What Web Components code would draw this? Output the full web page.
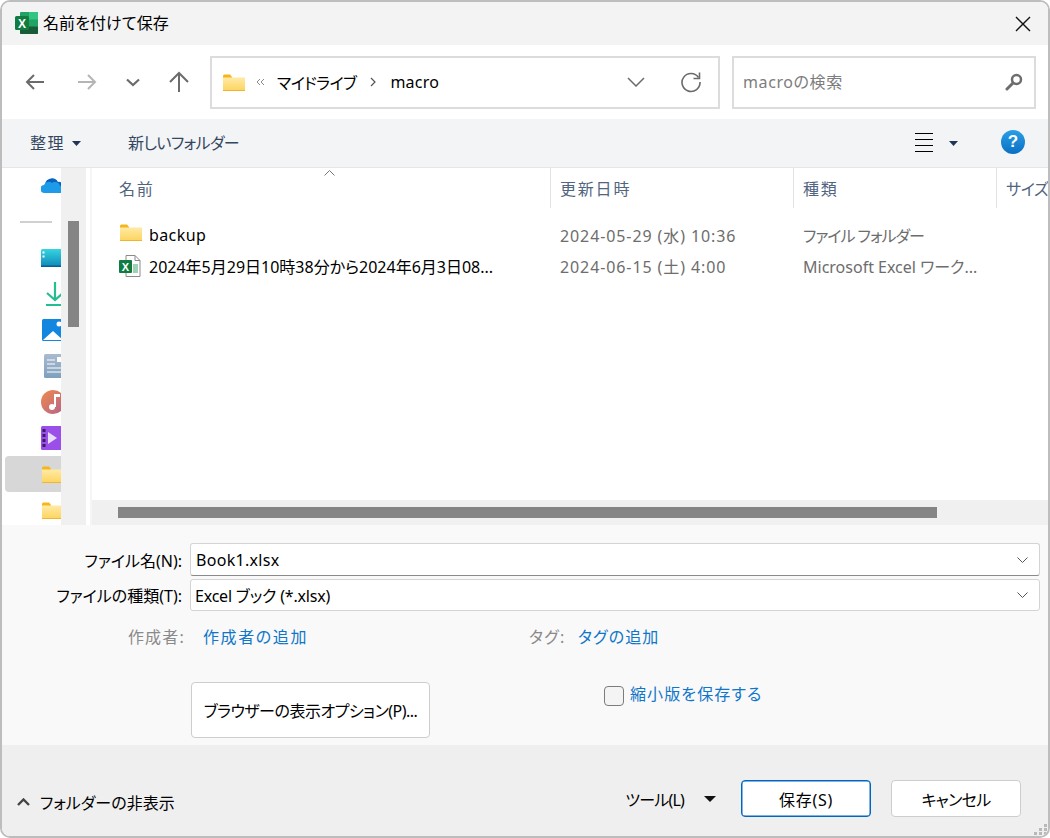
<!DOCTYPE html>
<html lang="ja">
<head>
<meta charset="utf-8">
<title>名前を付けて保存</title>
<style>
  html, body { margin: 0; padding: 0; background: #fff; }
  body { font-family: "Noto Sans", "Noto Sans CJK JP", sans-serif; font-size: 16px; color: #000; font-feature-settings: "palt"; }
</style>
</head>
<body>
<save-dialog></save-dialog>

<script>
// shared icons
const ICONS = {
    folder: `<svg width="24" height="19" viewBox="0 0 24 19"><path d="M1 3a1.500 1.500 0 0 1 1.500-1.500H8l2 2.500v2H1z" fill="#f6b61a"/><path d="M1 4.500h22V17a1 1 0 0 1-1 1H2a1 1 0 0 1-1-1z" fill="url(#fg)"/><path d="M1 17.300h22V18H1z" fill="#e9a825"/><defs><linearGradient id="fg" x1="0" y1="0" x2="0" y2="1"><stop offset="0" stop-color="#ffeaa6"/><stop offset="1" stop-color="#fdd45c"/></linearGradient></defs></svg>`,
    excel: `<svg width="24" height="24" viewBox="0 0 24 24"><rect x="6" y="1" width="18" height="22" rx="1" fill="#21a366"/><rect x="15" y="1" width="9" height="7.500" fill="#33c481"/><rect x="6" y="8" width="9" height="7.500" fill="#107c41"/><rect x="6" y="15.500" width="18" height="7.500" rx="1" fill="#185c37"/><rect x="1" y="5" width="14" height="14" rx="1.500" fill="#107c41"/><text x="8" y="16.500" font-family="Liberation Sans" font-size="12" font-weight="700" fill="#fff" text-anchor="middle">X</text></svg>`,
    caret: `<svg width="9" height="5" viewBox="0 0 9 5"><path d="M0 0h9L4.500 5z" fill="#1f3556"/></svg>`
};

function define(name, css, html) {
    customElements.define(name, class extends HTMLElement {
        constructor() {
            super();
            this.attachShadow({ mode: 'open' }).innerHTML = `<style>${css}</style>${html}`;
        }
    });
}

define('title-bar', `
    :host { display: flex; align-items: center; height: 43px; background: #f3f3f3; padding: 0 12px; }
    svg.app { margin-right: 5px; position: relative; top: -1px; }
    span { flex: 1; position: relative; top: -2px; letter-spacing: .1px; }
    svg.close { margin-right: 5px; }
`, `
    ${ICONS.excel.replace('<svg', '<svg class="app"')}
    <span>名前を付けて保存</span>
    <svg class="close" width="16" height="16" viewBox="0 0 16 16"><path d="M1 1l14 14M15 1L1 15" stroke="#111" stroke-width="1.400" fill="none"/></svg>
`);

define('nav-bar', `
    :host { display: flex; align-items: center; height: 74px; background: #fff; padding: 0 12px 0 21px; box-sizing: border-box; }
    .b { display: flex; width: 24px; justify-content: center; }
    .path, .search { display: flex; align-items: center; height: 53px; box-sizing: border-box; border: 2px solid #dcdcdc; }
    .path { width: 510px; margin-left: 19px; padding-left: 10px; }
    .search { width: 304px; margin-left: 12px; padding: 0 11px 0 9px; color: #7d7d7d; justify-content: space-between; }
    .grow { flex: 1; }
`, `
    <span class="b"><svg width="20" height="18" viewBox="0 0 20 18"><path d="M19 9H2M9 2L2 9l7 7" stroke="#6b6b6b" stroke-width="2" fill="none"/></svg></span>
    <span class="b" style="margin-left:28px"><svg width="20" height="18" viewBox="0 0 20 18"><path d="M1 9h17M11 2l7 7-7 7" stroke="#b5b5b5" stroke-width="2" fill="none"/></svg></span>
    <span class="b" style="margin-left:22px"><svg width="14" height="9" viewBox="0 0 14 9"><path d="M1 1.500l6 5.500 6-5.500" stroke="#6b6b6b" stroke-width="2.200" fill="none"/></svg></span>
    <span class="b" style="margin-left:22px"><svg width="20" height="22" viewBox="0 0 20 22"><path d="M10 21V2M1 11l9-9 9 9" stroke="#6b6b6b" stroke-width="2" fill="none"/></svg></span>
    <div class="path">
        ${ICONS.folder}
        <svg style="margin-left:10px" width="9" height="8" viewBox="0 0 9 8"><path d="M4 1L1 4l3 3M8 1L5 4l3 3" stroke="#8a8a8a" fill="none"/></svg>
        <span style="margin-left:12px;letter-spacing:-.6px">マイドライブ</span>
        <svg style="margin-left:14px" width="6" height="10" viewBox="0 0 6 10"><path d="M1 1l4 4-4 4" stroke="#555" stroke-width="1.200" fill="none"/></svg>
        <span style="margin-left:14px;letter-spacing:.2px">macro</span>
        <span class="grow"></span>
        <svg width="18" height="10" viewBox="0 0 18 10"><path d="M1 1l8 8 8-8" stroke="#6b6b6b" stroke-width="1.500" fill="none"/></svg>
        <svg style="margin:0 16px 0 35px" width="22" height="22" viewBox="0 0 22 22"><path d="M18.500 6.500A9 9 0 1 0 20 11" stroke="#6b6b6b" stroke-width="1.600" fill="none"/><path d="M19.500 1.500v6h-6" stroke="#6b6b6b" stroke-width="1.600" fill="none"/></svg>
    </div>
    <div class="search">
        <span style="letter-spacing:.6px;position:relative;top:-1px">macroの検索</span>
        <svg width="18" height="18" viewBox="0 0 18 18"><circle cx="11.500" cy="6.500" r="4.500" stroke="#6d6d6d" stroke-width="2.500" fill="none"/><path d="M8 10l-6 6" stroke="#6d6d6d" stroke-width="3" stroke-linecap="round"/></svg>
    </div>
`);

define('tool-bar', `
    :host { display: flex; align-items: center; height: 49px; box-sizing: border-box; background: #f3f4f6; border-bottom: 1px solid #e6e6e6; padding: 0 23px 0 28px; color: #33475f; }
    .t { position: relative; top: -1px; }
    .grow { flex: 1; }
    .help { width: 24px; height: 24px; border-radius: 50%; background: linear-gradient(#2a9fe6, #0a6fc4); color: #fff; text-align: center; font: 700 17px/24px "Liberation Sans", sans-serif; position: relative; top: -1px; }
    .lines { display: flex; flex-direction: column; gap: 5px; width: 18px; margin-left: 1px; position: relative; top: -1px; }
    .lines i { display: block; height: 1px; background: #000; }
`, `
    <span class="t" style="letter-spacing:1.500px">整理</span>
    <span style="display:flex;margin-left:7px">${ICONS.caret}</span>
    <span class="t" style="margin-left:47px;letter-spacing:-.6px">新しいフォルダー</span>
    <span class="grow"></span>
    <span class="lines"><i></i><i></i><i></i><i></i></span>
    <span style="display:flex;margin:0 43px 0 16px">${ICONS.caret}</span>
    <span class="help">?</span>
`);

define('nav-pane', `
    :host { display: flex; flex-direction: column; width: 59px; height: 357px; overflow: hidden; background: #fff; flex: none; }
    .row { display: flex; align-items: center; flex: none; height: 36px; margin-left: 3px; padding-left: 36px; border-radius: 4px; width: 120px; }
    .row svg { flex: none; }
    .sel { background: #d7d7d7; }
    .line { height: 2px; width: 32px; margin-left: -21px; background: #d0d0d0; }
`, `
    <div class="row"><svg width="24" height="16" viewBox="0 0 24 16"><path d="M4 6a7 7 0 0 1 13-2 5 5 0 0 1 6 4H9z" fill="#0a62c0"/><path d="M4 15a4 4 0 0 1-1-8 5 5 0 0 1 8-2 5 5 0 0 1 8 3h1a3.500 3.500 0 0 1 0 7z" fill="#1d9be8"/></svg></div>
    <div class="row"><div class="line"></div></div>
    <div class="row"><svg width="24" height="18" viewBox="0 0 24 18"><defs><linearGradient id="d" x1="0" y1="0" x2="0" y2="1"><stop offset="0" stop-color="#36d5e0"/><stop offset="1" stop-color="#0f86b8"/></linearGradient></defs><rect width="24" height="18" rx="1.500" fill="url(#d)"/><rect y="16.500" width="24" height="1.500" fill="#0a5c96"/><rect x="1.500" y="2.500" width="2" height="2" fill="#fff"/><rect x="1.500" y="6.500" width="2" height="2" fill="#fff"/></svg></div>
    <div class="row"><svg style="margin-left:4px" width="20" height="24" viewBox="0 0 20 24"><path d="M10 0v18M2 11l8 7 8-7" stroke="#26bd91" stroke-width="2.200" fill="none"/><path d="M1 23h18" stroke="#26bd91" stroke-width="2"/></svg></div>
    <div class="row"><svg style="margin-left:1px" width="24" height="22" viewBox="0 0 24 22"><rect width="24" height="22" rx="1.500" fill="#1386e0"/><path d="M1 21l10-9 10 9z" fill="#fff"/><circle cx="17" cy="5" r="2.500" fill="#fff"/></svg></div>
    <div class="row"><svg style="margin-left:3px" width="22" height="24" viewBox="0 0 22 24"><defs><linearGradient id="n" x1="0" y1="0" x2="0" y2="1"><stop offset="0" stop-color="#a9bbd0"/><stop offset="1" stop-color="#7f9fbd"/></linearGradient></defs><rect width="22" height="24" rx="1.500" fill="url(#n)"/><path d="M3 6h8M3 10h8M3 14h14M3 18h14" stroke="#fff" stroke-width="1.200"/><rect x="13" y="3" width="5" height="5" fill="#fff"/></svg></div>
    <div class="row"><svg width="24" height="24" viewBox="0 0 24 24"><defs><linearGradient id="m" x1="0" y1="0" x2="1" y2="1"><stop offset="0" stop-color="#f08a4c"/><stop offset="1" stop-color="#b4628c"/></linearGradient></defs><circle cx="12" cy="12" r="12" fill="url(#m)"/><path d="M14 4v13" stroke="#fff" stroke-width="2"/><circle cx="11" cy="17" r="3" fill="#fff"/><path d="M14 4h5v3h-5z" fill="#fff"/></svg></div>
    <div class="row"><svg width="24" height="24" viewBox="0 0 24 24"><rect width="24" height="24" rx="1.500" fill="#9a4fe8"/><path d="M7 6l9 6-9 6z" fill="#e8dcfb"/><path d="M1.500 3h3v3h-3zM1.500 8h3v3h-3zM1.500 13h3v3h-3zM1.500 18h3v3h-3z" fill="#3c1c6a"/></svg></div>
    <div class="row sel">${ICONS.folder}</div>
    <div class="row">${ICONS.folder}</div>
`);

define('v-scroll', `
    :host { display: block; width: 25px; height: 357px; background: #f0f0f0; padding: 53px 0 0 7px; box-sizing: border-box; flex: none; }
    div { width: 11px; height: 106px; background: #858585; }
`, `<div></div>`);

define('file-row', `
    :host { display: grid; grid-template-columns: 458px 243px 1fr; align-items: center; height: 31px; white-space: nowrap; }
    .name { display: flex; align-items: center; padding-left: 27px; }
    .ic { display: flex; width: 30px; flex: none; }
    .date { padding-left: 10px; color: #6d6d6d; letter-spacing: .9px; }
    .type { padding-left: 10px; color: #6d6d6d; }
`, `
    <div class="name"><span class="ic"><slot name="icon"></slot></span><slot name="name"></slot></div>
    <div class="date"><slot name="date"></slot></div>
    <div class="type"><slot name="type"></slot></div>
`);

define('file-list', `
    :host { display: flex; flex-direction: column; flex: 1; height: 357px; min-width: 0; background: #fff; }
    .head { display: grid; grid-template-columns: 459px 243px 203px 1fr; height: 40px; color: #51657f; position: relative; flex: none; letter-spacing: 1.800px; }
    .head div { padding-left: 9px; display: flex; align-items: center; border-right: 1px solid #e3e3e3; box-sizing: border-box; overflow: hidden; white-space: nowrap; }
    .head div:first-child { padding-left: 27px; }
    .head div:last-of-type { border: 0; letter-spacing: -.3px; }
    .sort { position: absolute; left: 232px; top: 2px; }
    .rows { flex: 1; padding-top: 11px; }
    .hs { height: 25px; background: #f0f0f0; padding: 7px 0 0 26px; box-sizing: border-box; flex: none; }
    .hs i { display: block; width: 819px; height: 11px; background: #858585; }
`, `
    <div class="head">
        <div>名前</div><div>更新日時</div><div>種類</div><div>サイズ</div>
        <svg class="sort" width="11" height="6" viewBox="0 0 11 6"><path d="M.5 5.500l5-5 5 5" stroke="#777" fill="none"/></svg>
    </div>
    <div class="rows"><slot></slot></div>
    <div class="hs"><i></i></div>
`);

define('field-row', `
    :host { display: grid; grid-template-columns: 180px 850px; column-gap: 8px; align-items: center; }
    label { text-align: right; white-space: nowrap; }
    .box { display: flex; align-items: center; justify-content: space-between; box-sizing: border-box; height: var(--h, 33px); background: #fff; border: 1px solid #d4d4d4; border-bottom-color: var(--under, #d4d4d4); border-radius: 3px; padding: 0 11px 0 var(--pad, 5px); letter-spacing: var(--ls, .3px); }
`, `
    <label style="letter-spacing:0"><slot name="label"></slot></label>
    <div class="box">
        <slot></slot>
        <svg width="11" height="6" viewBox="0 0 11 6"><path d="M.5.500l5 5 5-5" stroke="#555" fill="none"/></svg>
    </div>
`);

define('meta-row', `
    :host { display: flex; align-items: center; height: 24px; white-space: nowrap; }
    .k { color: #8a8a8a; letter-spacing: 1.200px; }
    .v { color: #0f76c9; letter-spacing: 1.600px; }
`, `
    <span class="k" style="width:183px;text-align:right">作成者:</span>
    <span class="v" style="width:326px;margin-left:18px">作成者の追加</span>
    <span class="k" style="width:49px">タグ:</span>
    <span class="v" style="letter-spacing:1.100px">タグの追加</span>
`);

define('dlg-button', `
    :host { display: flex; align-items: center; justify-content: center; box-sizing: border-box; width: var(--w, 130px); height: var(--bh, 37px); background: #fff; border: 1px solid #cdcdcd; border-radius: 4px; white-space: nowrap; flex: none; letter-spacing: var(--ls, 0); }
    :host([primary]) { border-color: #0067c0; box-shadow: inset 0 0 0 .5px #0067c0; }
`, `<slot></slot>`);

define('save-form', `
    :host { display: flex; flex-direction: column; height: 220px; background: #f9f9f9; padding-top: 18px; box-sizing: border-box; }
    .opts { display: flex; align-items: flex-start; margin: 34px 0 0 189px; }
    .check { display: flex; align-items: flex-start; margin: 4px 0 0 174px; color: #0f76c9; white-space: nowrap; letter-spacing: 1.100px; }
    .check i { display: block; width: 20px; height: 20px; box-sizing: border-box; background: #f4f4f4; border: 1px solid #7c7c7c; border-radius: 4px; margin: 0 6px 0 0; }
    .check span { line-height: 16px; }
`, `
    <field-row style="--under:#8a8a8a"><span slot="label">ファイル名(N):</span>Book1.xlsx</field-row>
    <field-row style="--h:32px;--pad:4px;--ls:-.2px;margin-top:3px"><span slot="label">ファイルの種類(T):</span>Excel ブック (*.xlsx)</field-row>
    <meta-row style="margin-top:13px"></meta-row>
    <div class="opts">
        <dlg-button style="--w:239px;--bh:56px;--ls:-.5px">ブラウザーの表示オプション(P)...</dlg-button>
        <div class="check"><i></i><span>縮小版を保存する</span></div>
    </div>
`);

define('dialog-footer', `
    :host { display: flex; align-items: flex-end; height: 91px; box-sizing: border-box; background: #efefef; padding: 0 27px 19px 15px; white-space: nowrap; position: relative; }
    .hide { display: flex; align-items: center; height: 37px; margin-bottom: -3px; }
    .hide svg { margin-right: 10px; }
    .grow { flex: 1; }
    .tools { display: flex; align-items: center; height: 37px; margin-right: 25px; letter-spacing: -.8px; }
    .grip { position: absolute; right: 0; bottom: 0; }
`, `
    <div class="hide"><svg width="13" height="8" viewBox="0 0 13 8"><path d="M1 7l5.500-5.500L12 7" stroke="#444" stroke-width="2.400" fill="none"/></svg>フォルダーの非表示</div>
    <span class="grow"></span>
    <div class="tools">ツール(L)<svg style="margin-left:20px" width="12" height="6" viewBox="0 0 12 6"><path d="M0 0h12L6 6z" fill="#111"/></svg></div>
    <dlg-button primary style="--ls:.7px">保存(S)</dlg-button>
    <dlg-button style="margin-left:20px;--ls:-.7px">キャンセル</dlg-button>
    <svg class="grip" width="14" height="12" viewBox="0 0 14 12" fill="#b9b9b9"><path d="M10 0h3v3h-3zM5 4h3v3H5zM10 4h3v3h-3zM0 8h3v3H0zM5 8h3v3H5zM10 8h3v3h-3z"/></svg>
`);

define('save-dialog', `
    :host { display: block; position: relative; width: 1050px; height: 838px; box-sizing: border-box; border: 2px solid #bdbdbd; border-radius: 10px; overflow: hidden; background: #fff; }
    /* sheet grid of the window behind, showing through the left border */
    :host::before { content: ""; position: absolute; left: -2px; top: 0; width: 2px; height: 100%; background: repeating-linear-gradient(180deg, #d6d6d6 0 1px, transparent 1px 28px, #6f6f6f 28px 29px, transparent 29px 58px, #6f6f6f 58px 59px, transparent 59px 84px); background-position: 0 -1px; }
    .main { display: flex; height: 357px; background: #fff; }
    .gap { width: 6px; flex: none; background: linear-gradient(90deg, #fff 4px, #f5f5f5 4px); }
`, `
    <title-bar></title-bar>
    <nav-bar></nav-bar>
    <tool-bar></tool-bar>
    <div class="main">
        <nav-pane></nav-pane>
        <v-scroll></v-scroll>
        <div class="gap"></div>
        <file-list>
            <file-row>
                <span slot="icon">${ICONS.folder}</span>
                <span slot="name" style="letter-spacing:.4px">backup</span>
                <span slot="date">2024-05-29 (水) 10:36</span>
                <span slot="type" style="letter-spacing:-1px">ファイル フォルダー</span>
            </file-row>
            <file-row>
                <span slot="icon" style="display:flex"><svg width="22" height="24" viewBox="0 0 22 24"><path d="M7 1.500h9l5 5V22.500H7z" fill="#fff" stroke="#8a8a8a"/><path d="M16 1.500v5h5" fill="none" stroke="#8a8a8a"/><rect x="14" y="10" width="5" height="9" fill="#9fd3b5"/><rect y="6" width="13" height="13" rx="1" fill="#107c41"/><text x="6.500" y="16.500" font-family="Liberation Sans" font-size="11" font-weight="700" fill="#fff" text-anchor="middle">X</text></svg></span>
                <span slot="name">2024年5月29日10時38分から2024年6月3日08...</span>
                <span slot="date">2024-06-15 (土) 4:00</span>
                <span slot="type">Microsoft Excel ワーク...</span>
            </file-row>
        </file-list>
    </div>
    <save-form></save-form>
    <dialog-footer></dialog-footer>
`);
</script>
</body>
</html>
